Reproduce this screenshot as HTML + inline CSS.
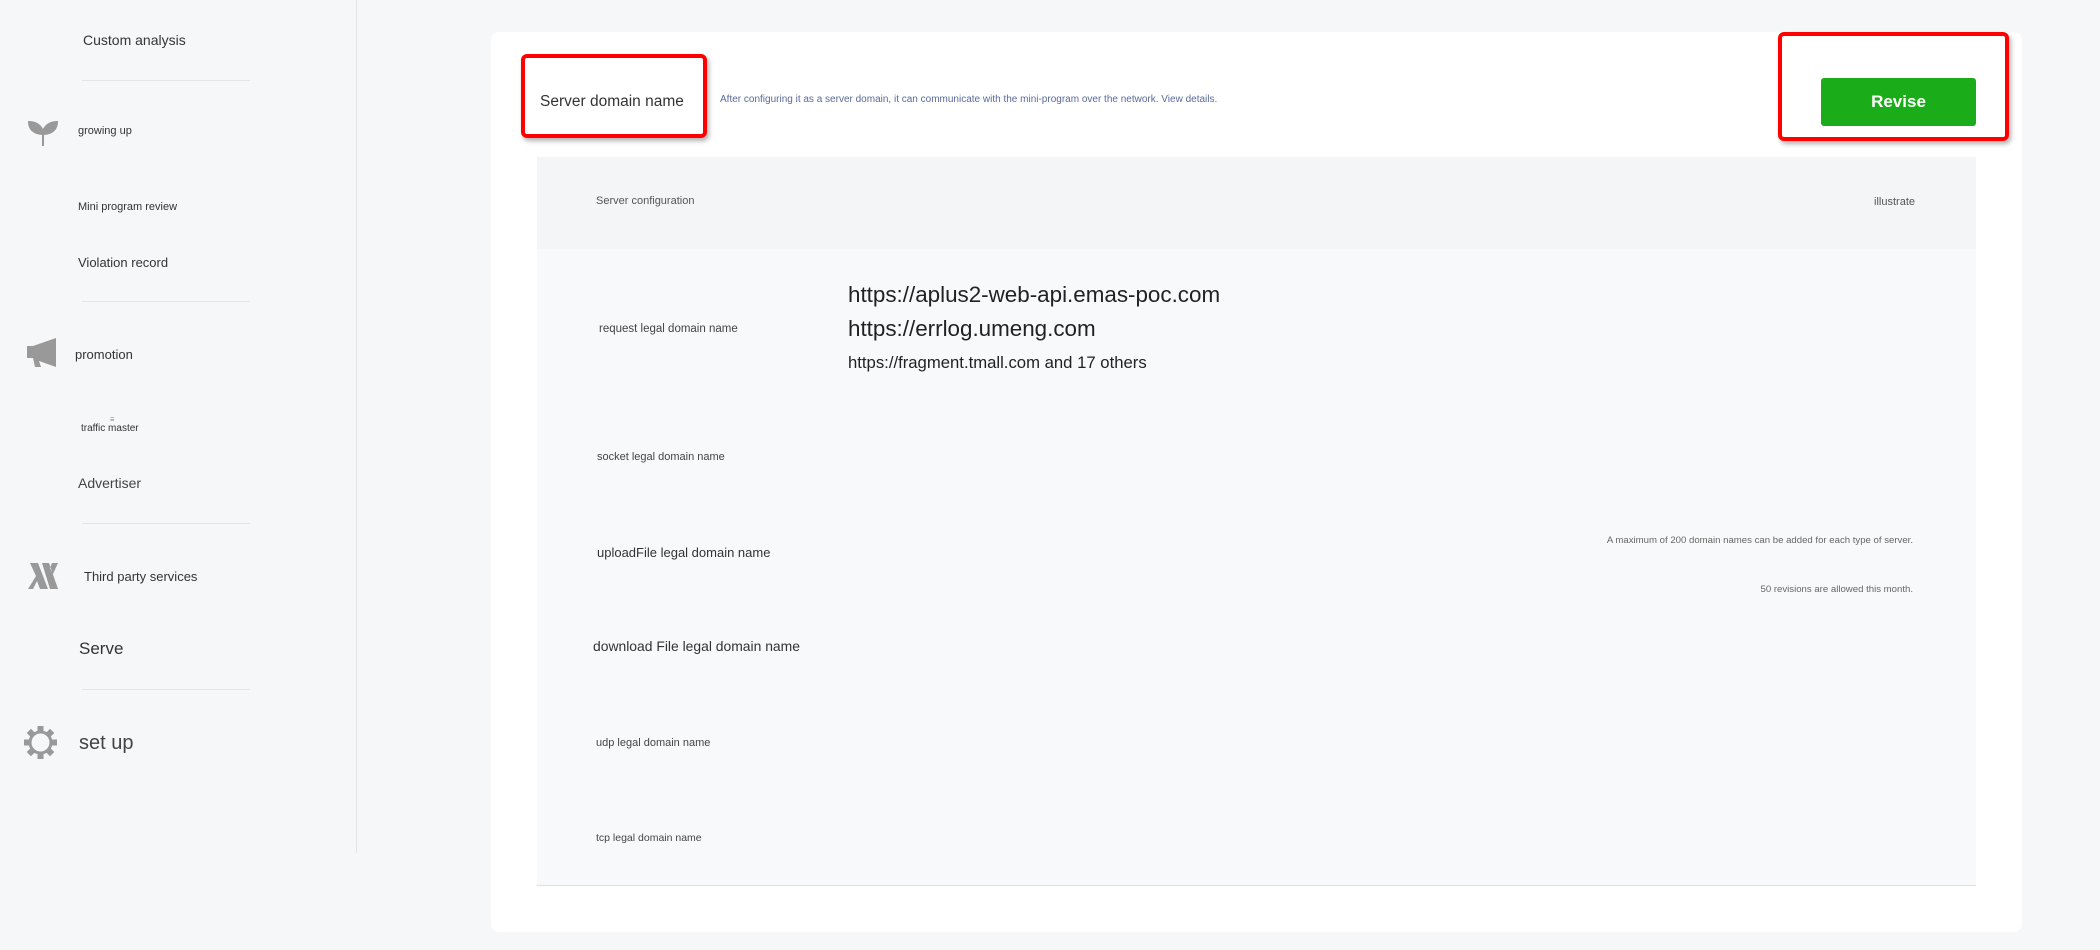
<!DOCTYPE html>
<html><head><meta charset="utf-8"><style>
*{margin:0;padding:0;box-sizing:border-box}
body{width:2100px;height:950px;background:#f6f7f9;position:relative;overflow:hidden;font-family:"Liberation Sans",sans-serif;color:#333}
.t{position:absolute;white-space:nowrap;line-height:1}
.div{position:absolute;left:82px;width:168px;height:1px;background:#e3e5e8}
svg{position:absolute}
</style></head><body>
<div style="position:absolute;left:356px;top:0;width:1px;height:853px;background:#e2e4e7"></div>

<div class="t" style="left:83px;top:33px;font-size:14px;color:#353535">Custom analysis</div>
<div class="div" style="top:80px"></div>
<svg style="left:28px;top:121px" width="30" height="25" viewBox="0 0 30 25"><path d="M15 25V13C15 6 9 1 1 1C1 8 6 13 15 13M15 13C24 13 29 8 29 1C21 1 15 6 15 13" fill="#999" stroke="#999" stroke-width="2"/></svg>
<div class="t" style="left:78px;top:126px;font-size:11px">growing up</div>
<div class="t" style="left:78px;top:202px;font-size:11px">Mini program review</div>
<div class="t" style="left:78px;top:256px;font-size:13px">Violation record</div>
<div class="div" style="top:301px"></div>
<svg style="left:27px;top:338px" width="30" height="29" viewBox="0 0 30 29"><path d="M0 8h6l23-8v29L12 23l2 6H8l-2-9H0z" fill="#999"/></svg>
<div class="t" style="left:75px;top:348px;font-size:13px">promotion</div>
<div class="t" style="left:81px;top:424px;font-size:10px">traffic master</div>
<div class="t" style="left:110px;top:418px;font-size:5px;color:#777">☰</div>
<div class="t" style="left:78px;top:476px;font-size:14px;color:#444">Advertiser</div>
<div class="div" style="top:523px"></div>
<svg style="left:28px;top:563px" width="30" height="26" viewBox="0 0 30 26"><path d="M0 26L8 13 2 0h8l10 26h-8l-3-8-4 8zM14 0h7l9 26h-8zM30 0h-6l-2 5 3 6z" fill="#999"/></svg>
<div class="t" style="left:84px;top:570px;font-size:13px">Third party services</div>
<div class="t" style="left:79px;top:640px;font-size:17px">Serve</div>
<div class="div" style="top:689px"></div>
<svg style="left:24px;top:726px" width="33" height="33" viewBox="0 0 33 33"><g fill="#999"><circle cx="16.5" cy="16.5" r="12"/><rect x="13.5" y="0" width="6" height="33"/><rect x="0" y="13.5" width="33" height="6"/><rect x="13.5" y="0" width="6" height="33" transform="rotate(45 16.5 16.5)"/><rect x="13.5" y="0" width="6" height="33" transform="rotate(-45 16.5 16.5)"/></g><circle cx="16.5" cy="16.5" r="9" fill="#f6f7f9"/></svg>
<div class="t" style="left:79px;top:733px;font-size:20px;color:#444">set up</div>

<div style="position:absolute;left:491px;top:32px;width:1531px;height:900px;background:#fff;border-radius:8px"></div>
<div style="position:absolute;left:521px;top:54px;width:186px;height:84px;border:4px solid #f00;border-radius:6px;box-shadow:2px 3px 5px rgba(0,0,0,.3)"></div>
<div class="t" style="left:540px;top:94px;font-size:15.5px;color:#333">Server domain name</div>
<div class="t" style="left:720px;top:95px;font-size:10px;color:#5a6a9a">After configuring it as a server domain, it can communicate with the mini-program over the network. View details.</div>
<div style="position:absolute;left:1778px;top:32px;width:231px;height:109px;border:4px solid #f00;border-radius:6px;box-shadow:2px 3px 5px rgba(0,0,0,.3)"></div>
<div style="position:absolute;left:1821px;top:78px;width:155px;height:48px;background:#1aad19;border-radius:3px;color:#fff;font-size:17px;font-weight:bold;text-align:center;line-height:48px">Revise</div>

<div style="position:absolute;left:537px;top:157px;width:1439px;height:92px;background:#f3f5f7"></div>
<div style="position:absolute;left:537px;top:249px;width:1439px;height:637px;background:#f8f9fa;border-bottom:1px solid #dcdee3"></div>
<div class="t" style="left:596px;top:196px;font-size:11px;color:#555">Server configuration</div>
<div class="t" style="left:1815px;top:197px;font-size:11px;color:#555;width:100px;text-align:right">illustrate</div>

<div class="t" style="left:599px;top:324px;font-size:11.5px;color:#444">request legal domain name</div>
<div class="t" style="left:848px;top:284px;font-size:22.4px;color:#222">https://aplus2-web-api.emas-poc.com</div>
<div class="t" style="left:848px;top:318px;font-size:22.4px;color:#222">https://errlog.umeng.com</div>
<div class="t" style="left:848px;top:355px;font-size:16.7px;color:#222">https://fragment.tmall.com and 17 others</div>

<div class="t" style="left:597px;top:452px;font-size:11px;color:#444">socket legal domain name</div>
<div class="t" style="left:597px;top:546px;font-size:13px;color:#333">uploadFile legal domain name</div>
<div class="t" style="left:593px;top:640px;font-size:13.9px;color:#333">download File legal domain name</div>
<div class="t" style="left:596px;top:738px;font-size:11px;color:#444">udp legal domain name</div>
<div class="t" style="left:596px;top:833px;font-size:10.5px;color:#444">tcp legal domain name</div>

<div class="t" style="right:187px;top:536px;font-size:9.6px;color:#666">A maximum of 200 domain names can be added for each type of server.</div>
<div class="t" style="right:187px;top:585px;font-size:9.6px;color:#666">50 revisions are allowed this month.</div>
</body></html>
